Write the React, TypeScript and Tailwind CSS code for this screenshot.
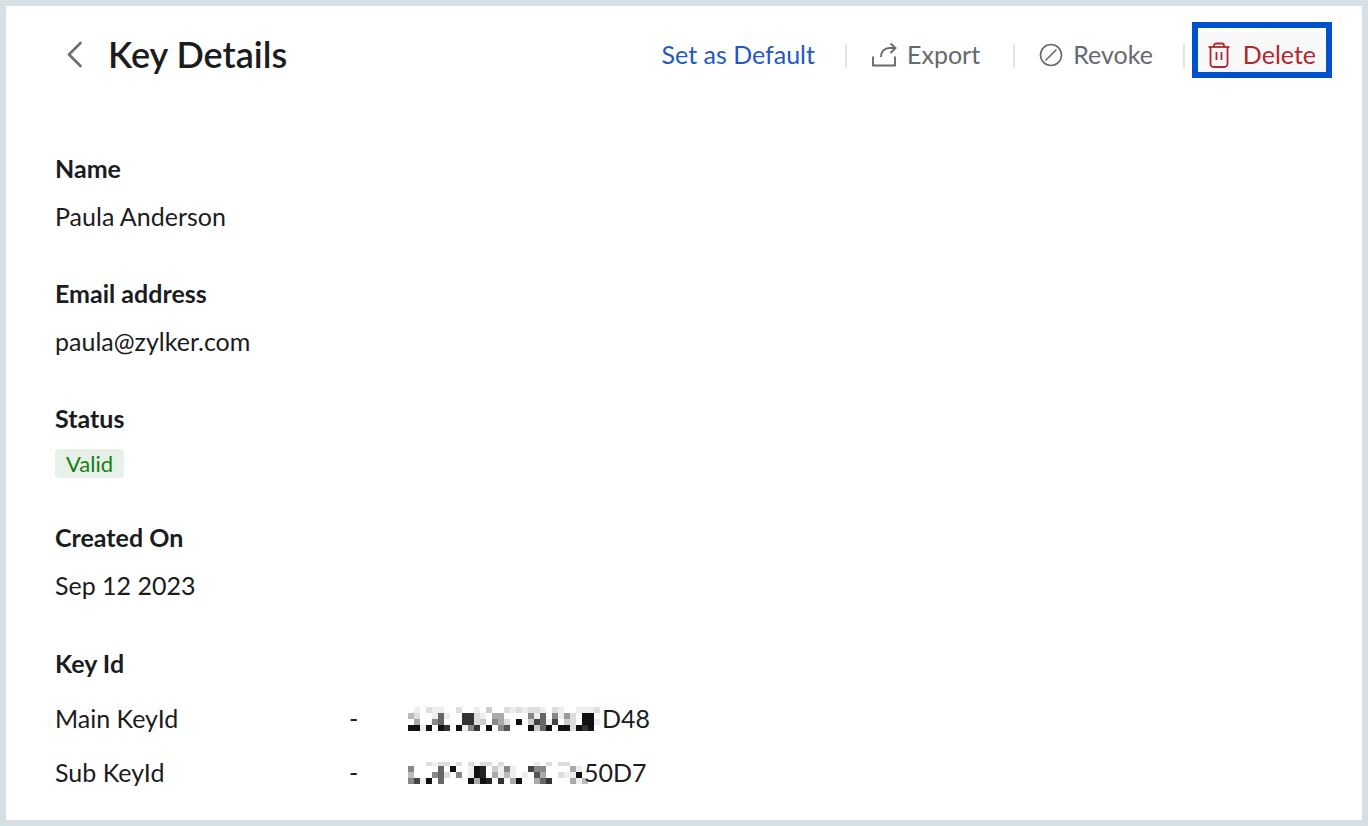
import React from 'react'

// One hex digit per cell: the grey level of that cell, f being blank
const MAIN_KEY_MASK = [
  'fefdeeffdffefcffdededdefdeffeeed',
  'bdffe6eff33defaaffff8e6f8e9df11f',
  'faff86fff33dcf8adf1fc46e4fcdf11e',
  '11e1f13f1e83f1f85fff1c61f11d131f',
]

const SUB_KEY_MASK = [
  'fffdeddfdfdfddfdfffffefdfddfff',
  '8ffff6f1ffe12fce8eff488ffffaef',
  'bfff86df8fe12faebefef5affdee1f',
  '84e1f6ffff1a12f3fa1ffa63fffaeb',
]

const CELL = 6

function KeyMask({ rows, firstRow = CELL }: { rows: string[]; firstRow?: number }) {
  const width = rows[0].length * CELL
  const height = firstRow + (rows.length - 1) * CELL
  return (
    <svg
      width={width}
      height={height}
      viewBox={`0 0 ${width} ${height}`}
      shapeRendering="crispEdges"
      aria-hidden
      className="shrink-0"
    >
      {rows.map((row, y) =>
        row.split('').map((level, x) =>
          level === 'f' ? null : (
            <rect
              key={`${x}-${y}`}
              x={x * CELL}
              y={y === 0 ? 0 : firstRow + (y - 1) * CELL}
              width={CELL}
              height={y === 0 ? firstRow : CELL}
              fill={`#${level}${level}${level}`}
            />
          )
        )
      )}
    </svg>
  )
}

function BackIcon() {
  return (
    <svg width="18" height="28" viewBox="0 0 18 28" fill="none" stroke="currentColor" strokeWidth="2.6" strokeLinecap="round" strokeLinejoin="round" aria-hidden>
      <path d="M14.5 3 3 14.5 14.5 26" />
    </svg>
  )
}

function ExportIcon() {
  return (
    <svg width="26" height="26" viewBox="0 0 26 26" fill="none" stroke="currentColor" strokeWidth="1.9" aria-hidden>
      <path d="M2 14.5v9h22v-9" />
      <path d="M10 15C10 9.5 13.5 6 18.5 6H24" />
      <path d="m19.5 1.5 5 4.5-5 5" />
    </svg>
  )
}

function RevokeIcon() {
  return (
    <svg width="24" height="24" viewBox="0 0 24 24" fill="none" stroke="currentColor" strokeWidth="1.6" aria-hidden>
      <circle cx="12" cy="12" r="10.5" />
      <path d="M6.5 17.5 17.5 6.5" />
    </svg>
  )
}

function TrashIcon() {
  return (
    <svg width="22" height="26" viewBox="0 0 22 26" fill="none" stroke="currentColor" strokeWidth="1.8" aria-hidden>
      <path d="M.5 5h21" />
      <path d="M6 5V3.5A2 2 0 0 1 8 1.5h6a2 2 0 0 1 2 2V5" />
      <path d="M2.5 5v17a3 3 0 0 0 3 3h11a3 3 0 0 0 3-3V5" />
      <path d="M8.5 10v8M13.5 10v8" />
    </svg>
  )
}

function Divider() {
  return <span className="mt-1 h-6 w-0.5 bg-[#e4e4e6]" aria-hidden />
}

function Field({ label, children }: { label: string; children: React.ReactNode }) {
  return (
    <div>
      <dt className="mb-4 leading-8 font-bold">{label}</dt>
      {children}
    </div>
  )
}

export default function App() {
  return (
    <main className="min-h-screen border-6 border-[#d6dfe4] bg-white font-['Lato',sans-serif] text-[25px] text-[#1b1c1e]">
      <header className="flex h-20 items-center justify-between pt-4 pr-[30px] pl-[60px]">
        <div className="flex items-center">
          <button type="button" aria-label="Back" className="mr-6 text-[#6c6e76]">
            <BackIcon />
          </button>
          <h1 className="text-4xl font-semibold">Key Details</h1>
        </div>
        <div className="flex h-full items-center text-[#66696f]">
          <button type="button" className="mr-[30px] pt-0.5 text-[#2459c0]">
            Set as Default
          </button>
          <Divider />
          <button type="button" className="mr-[33px] ml-6 flex items-center gap-2.5 pt-0.5">
            <ExportIcon />
            Export
          </button>
          <Divider />
          <button type="button" className="mr-[30px] ml-6 flex items-center gap-2.5 pt-0.5">
            <RevokeIcon />
            Revoke
          </button>
          <Divider />
          <div className="ml-[7px] h-14 self-start border-6 border-[#0051cd] pt-1">
            <button type="button" className="flex h-10 items-center gap-[13px] rounded-tr-md bg-[#f8f8f8] px-2.5 pt-1.5 text-[#ac2a32]">
              <TrashIcon />
              Delete
            </button>
          </div>
        </div>
      </header>

      <section className="px-[49px] pt-[66px]">
        <dl className="flex flex-col gap-[45px]">
          <Field label="Name">
            <dd className="leading-8">Paula Anderson</dd>
          </Field>
          <Field label="Email address">
            <dd className="leading-8">paula@zylker.com</dd>
          </Field>
          <Field label="Status">
            <dd className="pt-0.5 text-[22px] leading-6">
              <span className="rounded bg-[#e8f1e9] px-[11px] py-px text-[#14800f]">Valid</span>
            </dd>
          </Field>
          <Field label="Created On">
            <dd className="leading-8">Sep 12 2023</dd>
          </Field>
        </dl>

        <h2 id="key-id" className="mt-[46px] mb-[13px] leading-8 font-bold">
          Key Id
        </h2>
        <table aria-labelledby="key-id">
          <tbody>
            <tr className="h-[54px]">
              <th scope="row" className="w-[294px] text-left font-normal">Main KeyId</th>
              <td className="w-[59px]">-</td>
              <td>
                <div className="flex items-center gap-0.5">
                  <KeyMask rows={MAIN_KEY_MASK} />
                  D48
                </div>
              </td>
            </tr>
            <tr className="h-[54px]">
              <th scope="row" className="text-left font-normal">Sub KeyId</th>
              <td>-</td>
              <td>
                <div className="flex items-center">
                  <KeyMask rows={SUB_KEY_MASK} firstRow={4} />
                  <span className="-ml-1">50D7</span>
                </div>
              </td>
            </tr>
          </tbody>
        </table>
      </section>
    </main>
  )
}
